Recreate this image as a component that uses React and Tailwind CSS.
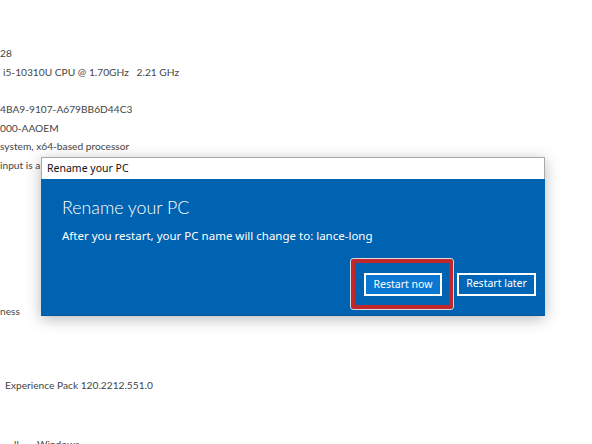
import React from "react";

const lines = [
  { text: "28", mt: "mt-[44px]" },
  { text: "i5-10310U CPU @ 1.70GHz\u00a0\u00a0\u00a02.21 GHz", mt: "mt-0", indent: "pl-[3px]" },
  { text: "4BA9-9107-A679BB6D44C3", mt: "mt-[18.5px]" },
  { text: "000-AAOEM", mt: "mt-0" },
  { text: "system, x64-based processor", mt: "mt-0" },
  { text: "input is a", mt: "mt-0" },
  { text: "ness", mt: "mt-[127px]" },
  { text: "Experience Pack 120.2212.551.0", mt: "mt-[56px]", indent: "pl-[5px]" },
  { text: "ll\u00a0\u00a0\u00a0\u00a0\u00a0\u00a0\u00a0Windows", mt: "mt-[40px]", indent: "pl-[14px]" },
];

const App = () => {
  return (
    <div className="relative w-[592px] h-[444px] overflow-hidden bg-white font-['Noto_Sans',sans-serif]">
      {/* system info text behind the dialog */}
      <div className="flex flex-col font-['Lato',sans-serif] text-[10.2px] leading-[18.7px] text-[#454545]">
        {lines.map((l, i) => (
          <div key={i} className={`${l.mt} ${l.indent || ""} whitespace-nowrap`}>
            {l.text}
          </div>
        ))}
      </div>

      {/* Rename dialog */}
      <div className="absolute left-[41px] top-[157px] w-[504px] h-[159px] flex flex-col shadow-[0_3px_14px_rgba(0,0,0,0.28)]">
        <div className="h-[22px] flex items-center pl-[5px] bg-white border border-[#a9a9a9] border-b-0 text-[10.5px] text-[#111]">
          Rename your PC
        </div>
        <div className="flex-1 flex flex-col bg-[#0063b1] border-b border-[#00579c] text-white">
          <div className="pl-[21px] pt-[16px] font-['Lato',sans-serif] text-[17.8px] font-light leading-[25px]">
            Rename your PC
          </div>
          <div className="pl-[21px] pt-[8px] text-[11.5px] leading-[16px]">
            After you restart, your PC name will change to: lance-long
          </div>
          <div className="mt-auto mb-[6px] flex items-center justify-end pr-[9px]">
            <div className="pl-[9px] pr-[7px] pt-[10px] pb-[9px] border-[4px] border-[#c1262c] rounded-[3px] shadow-[0_0_0_1px_#dcdcdc]">
              <button className="w-[78px] h-[23px] border-2 border-white bg-[#0a77d2] text-[10.5px] text-white flex items-center justify-center">
                Restart now
              </button>
            </div>
            <button className="ml-[4px] w-[79px] h-[23px] border-2 border-white bg-[#0067b8] text-[10.5px] text-white flex items-center justify-center">
              Restart later
            </button>
          </div>
        </div>
      </div>
    </div>
  );
};

export default App;
